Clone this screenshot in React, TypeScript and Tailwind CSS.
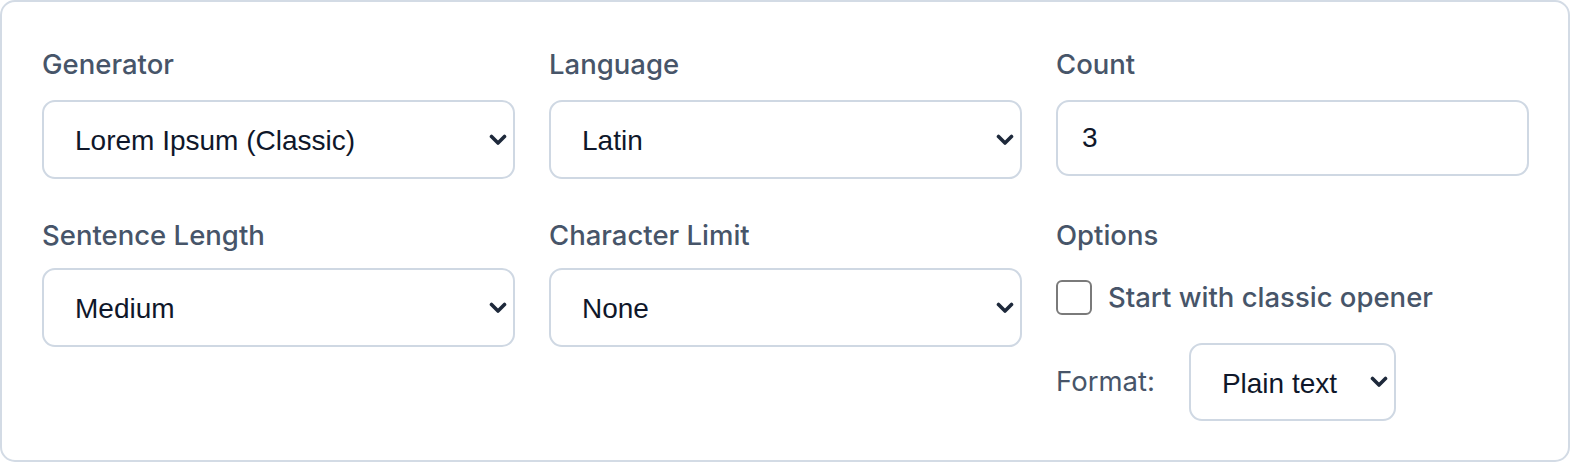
import React from "react";

const labelCls =
  "block h-[36px] leading-[36px] text-[27.5px] font-medium text-[#475569] [font-family:Inter,'Noto_Sans',sans-serif]";
const fieldText =
  "text-[28px] text-[#0f172a] [font-family:'Liberation_Sans',Arial,sans-serif]";

function Chevron() {
  return (
    <svg
      width="18"
      height="12"
      viewBox="0 0 18 12"
      className="pointer-events-none absolute right-[8px] top-1/2 -translate-y-1/2"
    >
      <path
        d="M2.5 2.5 L9 9 L15.5 2.5"
        fill="none"
        stroke="#1e293b"
        strokeWidth="3.6"
        strokeLinecap="round"
        strokeLinejoin="round"
      />
    </svg>
  );
}

function SelectBox({
  value,
  options,
  className = "",
}: {
  value: string;
  options: string[];
  className?: string;
}) {
  return (
    <div className={`relative ${className}`}>
      <select
        defaultValue={value}
        className={`h-full w-full appearance-none rounded-[13px] border-2 border-[#cfd8e3] bg-white pl-[31px] pt-[3px] outline-none ${fieldText}`}
      >
        {options.map((o) => (
          <option key={o}>{o}</option>
        ))}
      </select>
      <Chevron />
    </div>
  );
}

export default function App() {
  return (
    <div className="h-[464px] w-[1572px] bg-white">
      <div className="h-[462px] w-[1570px] rounded-[15px] border-2 border-[#d3dbe5] bg-white pl-[40px] pr-[39px] pt-[44px]">
        <div className="grid grid-cols-3 gap-x-[34px]">
          {/* row 1 */}
          <div>
            <label className={labelCls}>Generator</label>
            <SelectBox
              className="mt-[18px] h-[79px]"
              value="Lorem Ipsum (Classic)"
              options={["Lorem Ipsum (Classic)", "Hipster Ipsum", "Corporate Ipsum"]}
            />
          </div>
          <div>
            <label className={labelCls}>Language</label>
            <SelectBox
              className="mt-[18px] h-[79px]"
              value="Latin"
              options={["Latin", "English"]}
            />
          </div>
          <div>
            <label className={labelCls}>Count</label>
            <input
              type="text"
              defaultValue="3"
              className={`mt-[18px] h-[76px] w-full rounded-[13px] border-2 border-[#cfd8e3] bg-white pl-[24px] outline-none ${fieldText}`}
            />
          </div>

          {/* row 2 */}
          <div className="mt-[38px]">
            <label className={labelCls}>Sentence Length</label>
            <SelectBox
              className="mt-[15px] h-[79px]"
              value="Medium"
              options={["Short", "Medium", "Long"]}
            />
          </div>
          <div className="mt-[38px]">
            <label className={labelCls}>Character Limit</label>
            <SelectBox
              className="mt-[15px] h-[79px]"
              value="None"
              options={["None", "100", "250", "500"]}
            />
          </div>
          <div className="mt-[38px]">
            <label className={labelCls}>Options</label>
            <div className="mt-[27px] flex h-[35px] items-start gap-[16px]">
              <span className="h-[35px] w-[36px] shrink-0 rounded-[6px] border-2 border-[#7a7a7a] bg-white" />
              <span className="h-[34px] leading-[34px] text-[27.5px] font-medium text-[#475569] [font-family:Inter,'Noto_Sans',sans-serif]">
                Start with classic opener
              </span>
            </div>
            <div className="mt-[28px] flex items-center gap-[34px]">
              <span className="text-[27.5px] text-[#475569] [font-family:Inter,'Noto_Sans',sans-serif]">
                Format:
              </span>
              <SelectBox
                className="h-[78px] w-[207px]"
                value="Plain text"
                options={["Plain text", "HTML", "Markdown"]}
              />
            </div>
          </div>
        </div>
      </div>
    </div>
  );
}
